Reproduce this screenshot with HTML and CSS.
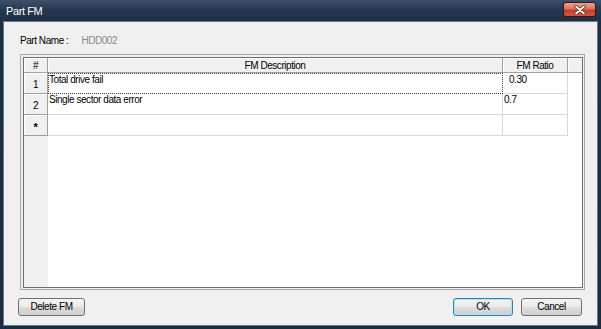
FILE: index.html
```html
<!DOCTYPE html>
<html>
<head>
<meta charset="utf-8">
<link rel="stylesheet" href="styles.css">
</head>
<body>
<div class="window">
  <div class="titlebar">
    <span class="title">Part FM</span>
    <div class="close">
      <svg width="12" height="10" viewBox="0 0 12 10">
        <path d="M2 1.5 L10 8.5 M10 1.5 L2 8.5" stroke="#5a2418" stroke-width="3.4" stroke-linecap="round"/>
        <path d="M2 1.5 L10 8.5 M10 1.5 L2 8.5" stroke="#ffffff" stroke-width="1.8" stroke-linecap="round"/>
      </svg>
    </div>
  </div>
  <div class="frame">
    <div class="partname">
      <span class="label">Part Name :</span>
      <span class="value">HDD002</span>
    </div>
    <div class="gridbox">
      <div class="grid">
        <div class="hcell">#</div>
        <div class="hcell">FM Description</div>
        <div class="hcell">FM Ratio</div>
        <div class="hcell filler"></div>

        <div class="rhead">1</div>
        <div class="cell focus">Total drive fail</div>
        <div class="cell ratio-edit">0.30</div>
        <div class="blank"></div>

        <div class="rhead">2</div>
        <div class="cell">Single sector data error</div>
        <div class="cell">0.7</div>
        <div class="blank"></div>

        <div class="rhead star">*</div>
        <div class="cell"></div>
        <div class="cell"></div>
        <div class="blank"></div>

        <div class="rfill"></div>
        <div class="bfill"></div>
      </div>
    </div>
    <div class="buttons">
      <button class="btn btn-delete">Delete FM</button>
      <div class="right">
        <button class="btn btn-ok">OK</button>
        <button class="btn btn-cancel">Cancel</button>
      </div>
    </div>
  </div>
</div>
</body>
</html>
```

FILE: styles.css
```css
html, body {
  margin: 0;
  padding: 0;
  width: 601px;
  height: 329px;
  overflow: hidden;
  background: #1f3049;
}

.window {
  width: 601px;
  height: 329px;
  display: flex;
  flex-direction: column;
  box-sizing: border-box;
  background: linear-gradient(#3d506a 0px, #26384f 10px, #1e2e45 22px, #1c2b40 100%);
  font-family: "Liberation Sans", Arial, sans-serif;
  font-size: 10px;
  letter-spacing: -0.45px;
  color: #000;
}

.titlebar {
  height: 21px;
  display: flex;
  justify-content: space-between;
  align-items: flex-start;
  flex: none;
}

.title {
  color: #ffffff;
  font-size: 11px;
  letter-spacing: -0.4px;
  margin-left: 6px;
  line-height: 22px;
}

.close {
  width: 33px;
  height: 15px;
  margin-top: 2px;
  margin-right: 5px;
  box-sizing: border-box;
  border: 1px solid #3a1712;
  border-radius: 3px;
  background: linear-gradient(#eaa593 0%, #d9735f 45%, #c53f26 55%, #d0573f 100%);
  display: flex;
  align-items: center;
  justify-content: center;
}

.close svg {
  display: block;
}

.frame {
  flex: 1;
  margin: 0 3px 3px 3px;
  border: 1px solid #6a7a8e;
  background: #f0f0f0;
  display: flex;
  flex-direction: column;
}

.partname {
  margin: 13px 0 0 16px;
  height: 12px;
  line-height: 12px;
  display: flex;
  flex: none;
}

.partname .value {
  color: #8a8a8a;
  margin-left: 13px;
}

.gridbox {
  margin: 7px 0 0 16px;
  width: 565px;
  height: 236px;
  box-sizing: border-box;
  border: 1px solid #a8a8a8;
  padding: 2px 1px 1px 2px;
  flex: none;
  display: flex;
}

.grid {
  flex: 1;
  border: 1px solid #6e6e6e;
  background: #ffffff;
  display: grid;
  grid-template-columns: 24px 455px 65px 1fr;
  grid-template-rows: 15px 21px 21px 21px 1fr;
  line-height: 12px;
}

.hcell {
  background: #f0f0f0;
  border-right: 1px solid #a0a0a0;
  border-bottom: 1px solid #a0a0a0;
  box-shadow: inset 1px 1px 0 #ffffff;
  display: flex;
  align-items: center;
  justify-content: center;
  padding-top: 1px;
  box-sizing: border-box;
}

.hcell.filler {
  border-right: none;
}

.rhead {
  background: #f0f0f0;
  border-right: 1px solid #a0a0a0;
  border-bottom: 1px solid #a0a0a0;
  box-shadow: inset 1px 1px 0 #ffffff;
  display: flex;
  align-items: center;
  justify-content: center;
  padding-top: 3px;
  box-sizing: border-box;
}

.rhead.star {
  font-weight: bold;
  font-size: 11px;
}

.cell {
  border-right: 1px solid #d8d8d8;
  border-bottom: 1px solid #d8d8d8;
  padding: 0 0 0 1px;
  box-sizing: border-box;
  white-space: nowrap;
  overflow: hidden;
}

.cell.focus {
  border: 1px dotted #404040;
  padding: 0;
}

.cell.ratio-edit {
  padding-left: 6px;
  padding-top: 1px;
}

.blank {
  background: #ffffff;
}

.rfill {
  background: #f0f0f0;
}

.bfill {
  grid-column: 2 / 5;
  background: #ffffff;
}

.buttons {
  margin: 8px 15px 0 14px;
  display: flex;
  justify-content: space-between;
  flex: none;
}

.right {
  display: flex;
  gap: 8px;
}

.btn {
  height: 18px;
  box-sizing: border-box;
  border: 1px solid #707070;
  border-radius: 3px;
  background: linear-gradient(#f3f3f3 0%, #ebebeb 48%, #dddddd 52%, #cfcfcf 100%);
  font-family: "Liberation Sans", Arial, sans-serif;
  font-size: 10px;
  letter-spacing: -0.45px;
  color: #000;
  padding: 0;
  margin: 0;
  line-height: 14px;
}

.btn-delete {
  width: 67px;
}

.btn-ok {
  width: 60px;
  border-color: #3c7fb1;
  box-shadow: inset 0 0 0 1px #a6e3f7;
}

.btn-cancel {
  width: 61px;
}
```
